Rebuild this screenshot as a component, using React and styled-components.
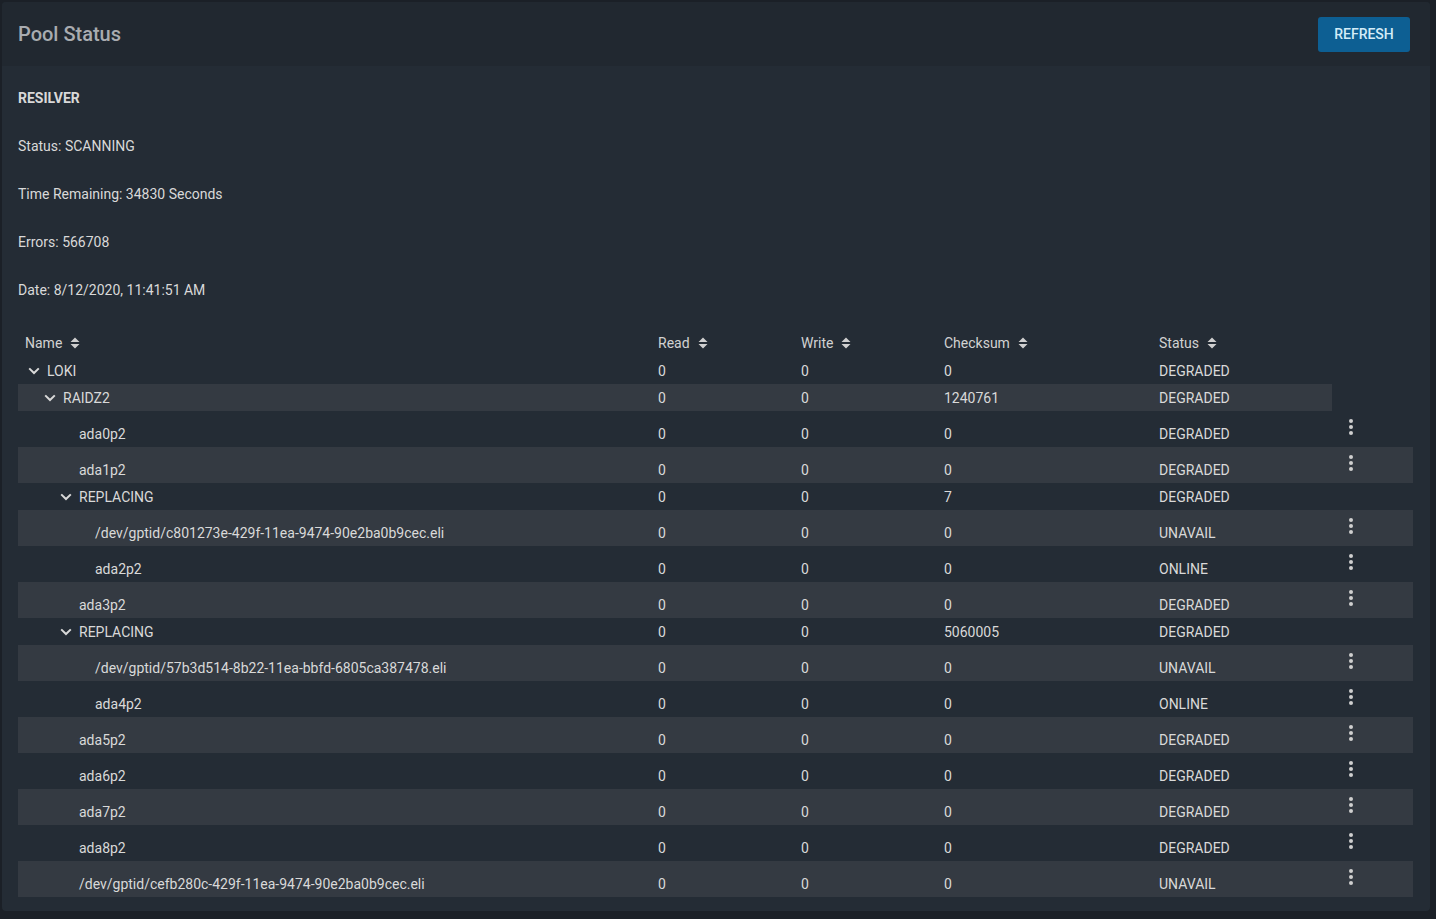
import React from "react";
import styled, { createGlobalStyle } from "styled-components";

const GlobalStyle = createGlobalStyle`
  html, body {
    margin: 0;
    padding: 0;
    background: #1b2027;
    font-family: Roboto, "Liberation Sans", Arial, sans-serif;
    color: #d6d6d6;
  }
  * { box-sizing: border-box; }
`;

const COLS = "633px 143px 143px 215px 180px 81px";

const poolRows = [
  { name: "LOKI", level: 0, parent: true, read: 0, write: 0, checksum: 0, status: "DEGRADED" },
  { name: "RAIDZ2", level: 1, parent: true, read: 0, write: 0, checksum: 1240761, status: "DEGRADED" },
  { name: "ada0p2", level: 2, read: 0, write: 0, checksum: 0, status: "DEGRADED" },
  { name: "ada1p2", level: 2, read: 0, write: 0, checksum: 0, status: "DEGRADED" },
  { name: "REPLACING", level: 2, parent: true, read: 0, write: 0, checksum: 7, status: "DEGRADED" },
  { name: "/dev/gptid/c801273e-429f-11ea-9474-90e2ba0b9cec.eli", level: 3, read: 0, write: 0, checksum: 0, status: "UNAVAIL" },
  { name: "ada2p2", level: 3, read: 0, write: 0, checksum: 0, status: "ONLINE" },
  { name: "ada3p2", level: 2, read: 0, write: 0, checksum: 0, status: "DEGRADED" },
  { name: "REPLACING", level: 2, parent: true, read: 0, write: 0, checksum: 5060005, status: "DEGRADED" },
  { name: "/dev/gptid/57b3d514-8b22-11ea-bbfd-6805ca387478.eli", level: 3, read: 0, write: 0, checksum: 0, status: "UNAVAIL" },
  { name: "ada4p2", level: 3, read: 0, write: 0, checksum: 0, status: "ONLINE" },
  { name: "ada5p2", level: 2, read: 0, write: 0, checksum: 0, status: "DEGRADED" },
  { name: "ada6p2", level: 2, read: 0, write: 0, checksum: 0, status: "DEGRADED" },
  { name: "ada7p2", level: 2, read: 0, write: 0, checksum: 0, status: "DEGRADED" },
  { name: "ada8p2", level: 2, read: 0, write: 0, checksum: 0, status: "DEGRADED" },
  { name: "/dev/gptid/cefb280c-429f-11ea-9474-90e2ba0b9cec.eli", level: 2, read: 0, write: 0, checksum: 0, status: "UNAVAIL" },
];

const Page = styled.div`
  padding: 2px 6px 7px 2px;
`;

const Card = styled.div`
  background: #242c35;
  border-radius: 4px;
  overflow: hidden;
`;

const CardHeader = styled.div`
  height: 64px;
  background: #212830;
  display: flex;
  align-items: center;
  justify-content: space-between;
  padding: 0 20px 0 16px;
`;

const Title = styled.h1`
  margin: 0;
  font-size: 20px;
  font-weight: 500;
  color: #a9acb0;
`;

const RefreshButton = styled.button`
  height: 35px;
  width: 92px;
  border: none;
  border-radius: 3px;
  background: #0d5f93;
  color: #d3ecf8;
  font-family: inherit;
  font-size: 14px;
  font-weight: 500;
  cursor: pointer;
`;

const CardBody = styled.div`
  padding: 24px 17px 14px 16px;
`;

const Info = styled.div`
  display: flex;
  flex-direction: column;
  gap: 32px;
  margin-bottom: 31px;
`;

const InfoLine = styled.div`
  font-size: 14px;
  line-height: 16px;
  font-weight: ${(p) => (p.$bold ? 700 : 400)};
  color: #d9d9d9;
`;

const Row = styled.div`
  display: grid;
  grid-template-columns: ${COLS};
  height: ${(p) => p.$h}px;
  font-size: 14px;
  line-height: 16px;
  color: #d9d9d9;
  background: ${(p) => (p.$striped ? "#343a42" : "transparent")};
  width: ${(p) => (p.$actions ? "100%" : "calc(100% - 81px)")};
`;

const Cell = styled.div`
  padding: ${(p) => (p.$top ? "15px 7px 0" : "0 7px")};
  display: flex;
  align-items: ${(p) => (p.$top ? "flex-start" : "center")};
  white-space: nowrap;
`;

const HeadCell = styled(Cell)`
  gap: 8px;
  color: #d2d2d2;
`;

const ActionCell = styled.div`
  display: flex;
  justify-content: flex-start;
  align-items: flex-start;
  padding: 4px 0 0 7px;
`;

const IconButton = styled.button`
  width: 24px;
  height: 24px;
  padding: 0;
  border: none;
  background: none;
  color: #cfcfcf;
  cursor: pointer;
  display: flex;
`;

const NameWrap = styled.div`
  display: flex;
  align-items: center;
  padding-left: ${(p) => p.$level * 16}px;
`;

const Toggle = styled.span`
  width: 22px;
  height: 16px;
  display: flex;
  align-items: center;
  padding-left: 3px;
  color: #d9d9d9;
`;

const SortIcon = () => (
  <svg width="10" height="12" viewBox="0 0 10 12">
    <path d="M0.5 5 L5 0.5 L9.5 5 Z M0.5 7 L5 11.5 L9.5 7 Z" fill="#cfcfcf" />
  </svg>
);

const Chevron = () => (
  <svg width="12" height="8" viewBox="0 0 12 8">
    <path d="M1.2 1.4 L6 6 L10.8 1.4" fill="none" stroke="currentColor" strokeWidth="2" />
  </svg>
);

const MoreVert = () => (
  <svg width="24" height="24" viewBox="0 0 24 24">
    <circle cx="12" cy="6" r="2" fill="currentColor" />
    <circle cx="12" cy="12" r="2" fill="currentColor" />
    <circle cx="12" cy="18" r="2" fill="currentColor" />
  </svg>
);

const headers = ["Name", "Read", "Write", "Checksum", "Status"];

export default function App() {
  return (
    <>
      <GlobalStyle />
      <Page>
        <Card>
          <CardHeader>
            <Title>Pool Status</Title>
            <RefreshButton>REFRESH</RefreshButton>
          </CardHeader>
          <CardBody>
            <Info>
              <InfoLine $bold>RESILVER</InfoLine>
              <InfoLine>Status: SCANNING</InfoLine>
              <InfoLine>Time Remaining: 34830 Seconds</InfoLine>
              <InfoLine>Errors: 566708</InfoLine>
              <InfoLine>Date: 8/12/2020, 11:41:51 AM</InfoLine>
            </Info>

            <Row $h={28}>
              {headers.map((h) => (
                <HeadCell key={h}>
                  {h} <SortIcon />
                </HeadCell>
              ))}
            </Row>

            {poolRows.map((r, i) => {
              const leaf = !r.parent;
              return (
                <Row key={i} $h={leaf ? 36 : 27} $striped={i % 2 === 1} $actions={leaf}>
                  <Cell $top={leaf}>
                    <NameWrap $level={r.level}>
                      <Toggle>{r.parent && <Chevron />}</Toggle>
                      {r.name}
                    </NameWrap>
                  </Cell>
                  <Cell $top={leaf}>{r.read}</Cell>
                  <Cell $top={leaf}>{r.write}</Cell>
                  <Cell $top={leaf}>{r.checksum}</Cell>
                  <Cell $top={leaf}>{r.status}</Cell>
                  {leaf && (
                    <ActionCell>
                      <IconButton aria-label="more">
                        <MoreVert />
                      </IconButton>
                    </ActionCell>
                  )}
                </Row>
              );
            })}
          </CardBody>
        </Card>
      </Page>
    </>
  );
}
